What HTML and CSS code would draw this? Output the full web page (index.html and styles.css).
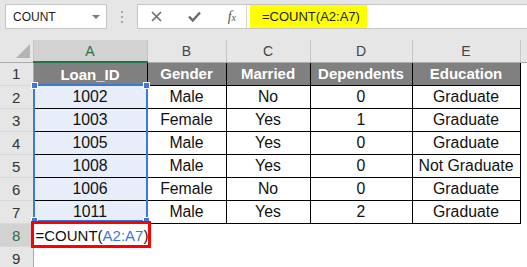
FILE: index.html
```html
<!DOCTYPE html>
<html>
<head>
    <meta charset="UTF-8">
    <title>COUNT</title>
    <link rel="stylesheet" href="styles.css">
</head>
<body>
    <div class="barra">
        <div class="caixaNome">
            <span>COUNT</span>
            <span class="seta"></span>
        </div>
        <div class="pontos"><i></i><i></i><i></i></div>
        <div class="formula">
            <div class="botoes">
                <svg width="11" height="11" viewBox="0 0 11 11"><path d="M1 1 L10 10 M10 1 L1 10" stroke="#6a6a6a" stroke-width="1.6"/></svg>
                <svg width="13" height="11" viewBox="0 0 13 11"><path d="M1 5.5 L4.8 9.5 L12 1.5" stroke="#6a6a6a" stroke-width="2.4" fill="none"/></svg>
                <span class="fx">f<small>x</small></span>
            </div>
            <div class="texto">=COUNT(A2:A7)</div>
        </div>
    </div>

    <div class="planilha">
        <table class="grade">
            <colgroup>
                <col class="cRow"><col class="cA"><col class="cB"><col class="cC"><col class="cD"><col class="cE"><col class="cF">
            </colgroup>
            <tr class="cabecalho">
                <th class="canto"><span class="triangulo"></span></th>
                <th class="ativo">A</th><th>B</th><th>C</th><th>D</th><th>E</th><th class="resto"></th>
            </tr>
            <tr>
                <td class="num">1</td>
                <td class="titulo">Loan_ID</td><td class="titulo">Gender</td><td class="titulo">Married</td><td class="titulo">Dependents</td><td class="titulo">Education</td><td></td>
            </tr>
            <tr><td class="num">2</td><td class="sel">1002</td><td class="d">Male</td><td class="d">No</td><td class="d">0</td><td class="d">Graduate</td><td></td></tr>
            <tr><td class="num">3</td><td class="sel">1003</td><td class="d">Female</td><td class="d">Yes</td><td class="d">1</td><td class="d">Graduate</td><td></td></tr>
            <tr><td class="num">4</td><td class="sel">1005</td><td class="d">Male</td><td class="d">Yes</td><td class="d">0</td><td class="d">Graduate</td><td></td></tr>
            <tr><td class="num">5</td><td class="sel">1008</td><td class="d">Male</td><td class="d">Yes</td><td class="d">0</td><td class="d">Not Graduate</td><td></td></tr>
            <tr><td class="num">6</td><td class="sel">1006</td><td class="d">Female</td><td class="d">No</td><td class="d">0</td><td class="d">Graduate</td><td></td></tr>
            <tr><td class="num">7</td><td class="sel">1011</td><td class="d">Male</td><td class="d">Yes</td><td class="d">2</td><td class="d">Graduate</td><td></td></tr>
            <tr>
                <td class="num numAtivo">8</td>
                <td class="editando">=COUNT(<span class="ref">A2:A7</span>)<span class="cursor"></span></td>
                <td></td><td></td><td></td><td></td><td></td>
            </tr>
            <tr><td class="num">9</td><td></td><td></td><td></td><td></td><td></td><td></td></tr>
        </table>

        <div class="intervalo">
            <i class="alca a1"></i><i class="alca a2"></i><i class="alca a3"></i><i class="alca a4"></i>
        </div>
        <div class="marcaVermelha"></div>
    </div>
</body>
</html>
```

FILE: styles.css
```css
body {
    margin: 0;
    width: 527px;
    height: 267px;
    overflow: hidden;
    background-color: #ffffff;
    font-family: "Liberation Sans", Arial, sans-serif;
}

/* barra de formulas */
.barra {
    height: 40px;
    background-color: #e6e6e6;
    display: flex;
    align-items: flex-start;
    padding-top: 4px;
    box-sizing: border-box;
}

.caixaNome {
    margin-left: 5px;
    width: 102px;
    height: 25px;
    box-sizing: border-box;
    background-color: #ffffff;
    border: 1px solid #c6c6c6;
    display: flex;
    align-items: center;
    justify-content: space-between;
    padding: 0 6px 0 7px;
    font-size: 12px;
    color: #222;
}

.seta {
    width: 0;
    height: 0;
    border-left: 4px solid transparent;
    border-right: 4px solid transparent;
    border-top: 4px solid #7a7a7a;
}

.pontos {
    width: 30px;
    height: 25px;
    display: flex;
    flex-direction: column;
    align-items: center;
    justify-content: center;
    gap: 3px;
}

.pontos i {
    width: 2px;
    height: 2px;
    background-color: #a8a8a8;
}

.formula {
    flex: 1;
    height: 25px;
    box-sizing: border-box;
    display: flex;
    background-color: #ffffff;
    border: 1px solid #c6c6c6;
    border-right: none;
}

.botoes {
    width: 109px;
    display: flex;
    align-items: center;
    justify-content: space-between;
    padding: 0 10px 0 13px;
    box-sizing: border-box;
    border-right: 1px solid #d4d4d4;
}

.fx {
    font-family: "Liberation Serif", serif;
    font-style: italic;
    font-size: 14px;
    color: #555;
}

.fx small {
    font-size: 10px;
}

.texto {
    margin-left: 3px;
    width: 117px;
    box-sizing: border-box;
    background-color: #ffff00;
    font-size: 13px;
    line-height: 23px;
    padding-left: 12px;
    color: #222;
}

/* planilha */
.planilha {
    position: relative;
}

.grade {
    border-collapse: collapse;
    table-layout: fixed;
    width: 527px;
    font-size: 15.8px;
}

.cRow { width: 33px; }
.cA { width: 114px; }
.cB { width: 79px; }
.cC { width: 84px; }
.cD { width: 102px; }
.cE { width: 108px; }
.cF { width: 7px; }

.grade td,
.grade th {
    padding: 0;
    text-align: center;
    white-space: nowrap;
    height: 22px;
}

.cabecalho th {
    height: 21px;
    background-color: #e6e6e6;
    font-weight: normal;
    font-size: 14px;
    color: #444;
    border-right: 1px solid #c6c6c6;
    border-bottom: 1px solid #ababab;
}

.cabecalho .ativo {
    background-color: #d2d2d2;
    color: #217346;
    border-bottom: 2px solid #217346;
}

.cabecalho .resto {
    border-right: none;
}

.canto {
    position: relative;
}

.triangulo {
    position: absolute;
    right: 3px;
    bottom: 4px;
    width: 0;
    height: 0;
    border-left: 14px solid transparent;
    border-bottom: 14px solid #b4b4b4;
}

.num {
    background-color: #e6e6e6;
    color: #333;
    font-size: 15px;
    border-bottom: 1px solid #d8d8d8;
    border-right: 1px solid #ababab;
}

.numAtivo {
    background-color: #d2d2d2;
    color: #217346;
}

.titulo {
    background-color: #808080;
    color: #ffffff;
    font-weight: bold;
    font-size: 15px;
    border: 1px solid #000;
}

.d {
    border: 1px solid #000;
    color: #111;
}

.sel {
    background-color: #e8eef9;
    border: 1px solid #000;
    color: #111;
}

.editando {
    text-align: left !important;
    padding-left: 2px !important;
    font-size: 15px;
    color: #111;
}

.ref {
    color: #3c78d8;
}

.cursor {
    display: inline-block;
    width: 1px;
    height: 17px;
    margin-left: 1px;
    vertical-align: -3px;
    background-color: #000;
}

/* destaque do intervalo A2:A7 */
.intervalo {
    position: absolute;
    left: 33px;
    top: 44px;
    width: 115px;
    height: 138px;
    box-sizing: border-box;
    border: 2px solid #3c78d8;
}

.alca {
    position: absolute;
    width: 5px;
    height: 5px;
    background-color: #3c78d8;
    border: 1px solid #ffffff;
}

.a1 { left: -4px; top: -4px; }
.a2 { right: -4px; top: -4px; }
.a3 { left: -4px; bottom: -4px; }
.a4 { right: -4px; bottom: -4px; }

.marcaVermelha {
    position: absolute;
    left: 31px;
    top: 181px;
    width: 120px;
    height: 27px;
    box-sizing: border-box;
    border: 3px solid #ff0000;
}
```
